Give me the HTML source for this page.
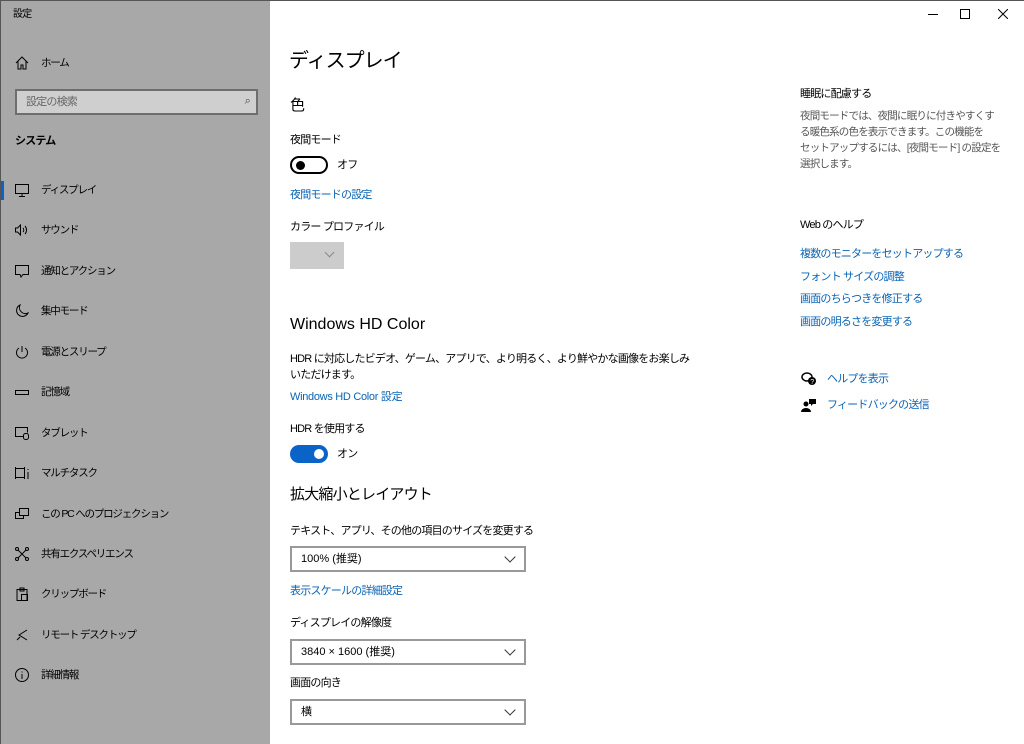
<!DOCTYPE html>
<html><head><meta charset="utf-8"><style>
*{margin:0;padding:0;box-sizing:border-box}
body{width:1024px;height:744px;overflow:hidden;font-family:"Liberation Sans","Noto Sans CJK JP",sans-serif;font-size:11px;letter-spacing:-0.8px;color:#000;background:#fff;position:relative}
.side{position:absolute;left:0;top:0;width:270px;height:744px;background:#a8a8a8;border-left:1px solid #555;border-top:1px solid #555}
.a{position:absolute;white-space:nowrap;line-height:16px}
.ic{position:absolute;left:13px;width:16px;height:16px}
.lnk{color:#0a64b4}
.item{position:absolute;left:40px;font-size:10.5px;letter-spacing:-1.2px;line-height:16px}
.dd{position:absolute;left:290px;width:236px;height:26px;border:2px solid #999;padding:4px 9px;font-size:11px;line-height:15px;letter-spacing:0}
.dd:after{content:"";position:absolute;right:10px;top:5px;width:7px;height:7px;border-right:1px solid #333;border-bottom:1px solid #333;transform:rotate(45deg)}
</style></head><body>
<div class="side">
<div class="a" style="left:12px;top:6px;font-size:10px">設定</div>
<svg class="ic" style="top:54px" viewBox="0 0 16 16" fill="none" stroke="#000"><path d="M2 8L8 2l6 6M4 6v8h3v-4h2v4h3V6"/></svg>
<div class="item" style="top:54px">ホーム</div>
<div class="a" style="left:14px;top:88px;width:243px;height:26px;background:#cfcfcf;border:2px solid #6e6e6e;color:#666;padding:3px 9px">設定の検索<span style="position:absolute;right:6px;top:2px;color:#444">⌕</span></div>
<div class="a" style="left:14px;top:132px;font-weight:bold;font-size:11px">システム</div>
<div class="a" style="left:0;top:180px;width:3px;height:19px;background:#0a64c8"></div>
<svg class="ic" style="top:181px" viewBox="0 0 16 16" fill="none" stroke="#000"><rect x="1.5" y="2.5" width="13" height="9"/><path d="M8 12v2M5 14.5h6"/></svg>
<div class="item" style="top:181px">ディスプレイ</div>
<svg class="ic" style="top:221px" viewBox="0 0 16 16" fill="none" stroke="#000"><path d="M1.5 6h2l3-3v10l-3-3h-2zM9 6a3 3 0 0 1 0 4M11 4a6 6 0 0 1 0 8"/></svg>
<div class="item" style="top:221px">サウンド</div>
<svg class="ic" style="top:262px" viewBox="0 0 16 16" fill="none" stroke="#000"><path d="M1.5 2.5h13v9H9l-2 2.5-1-2.5H1.5z"/></svg>
<div class="item" style="top:262px">通知とアクション</div>
<svg class="ic" style="top:302px" viewBox="0 0 16 16" fill="none" stroke="#000"><path d="M6 2a6 6 0 1 0 8 8A6 6 0 0 1 6 2z"/></svg>
<div class="item" style="top:302px">集中モード</div>
<svg class="ic" style="top:343px" viewBox="0 0 16 16" fill="none" stroke="#000"><path d="M5 4a5.5 5.5 0 1 0 6 0M8 2v6"/></svg>
<div class="item" style="top:343px">電源とスリープ</div>
<svg class="ic" style="top:383px" viewBox="0 0 16 16" fill="none" stroke="#000"><rect x="1.5" y="6.5" width="13" height="4"/></svg>
<div class="item" style="top:383px">記憶域</div>
<svg class="ic" style="top:424px" viewBox="0 0 16 16" fill="none" stroke="#000"><path d="M9 11.5H1.5v-9h12v5"/><rect x="9.5" y="8.5" width="5" height="6" rx="2"/></svg>
<div class="item" style="top:424px">タブレット</div>
<svg class="ic" style="top:464px" viewBox="0 0 16 16" fill="none" stroke="#000"><path d="M1.5 2v12M10.5 2v12M1.5 3.5h9M1.5 12.5h9M14 4v1M14 7v7"/></svg>
<div class="item" style="top:464px">マルチタスク</div>
<svg class="ic" style="top:505px" viewBox="0 0 16 16" fill="none" stroke="#000"><rect x="5.5" y="2.5" width="9" height="7"/><path d="M5 6.5H1.5v6h8V10"/></svg>
<div class="item" style="top:505px">この PC へのプロジェクション</div>
<svg class="ic" style="top:545px" viewBox="0 0 16 16" fill="none" stroke="#000"><circle cx="3" cy="3" r="1.5"/><circle cx="13" cy="3" r="1.5"/><circle cx="3" cy="13" r="1.5"/><circle cx="13" cy="13" r="1.5"/><path d="M4 4l8 8M12 4l-8 8"/></svg>
<div class="item" style="top:545px">共有エクスペリエンス</div>
<svg class="ic" style="top:585px" viewBox="0 0 16 16" fill="none" stroke="#000"><path d="M3 3.5h10v11H3zM6 2h4v3H6z"/><rect x="7.5" y="8.5" width="6" height="6"/></svg>
<div class="item" style="top:585px">クリップボード</div>
<svg class="ic" style="top:626px" viewBox="0 0 16 16" fill="none" stroke="#000"><path d="M13 3L5 8l8 5M3 13l3-3"/></svg>
<div class="item" style="top:626px">リモート デスクトップ</div>
<svg class="ic" style="top:666px" viewBox="0 0 16 16" fill="none" stroke="#000"><circle cx="8" cy="8" r="6.5"/><path d="M8 7v5M8 4.5v1"/></svg>
<div class="item" style="top:666px">詳細情報</div>
</div>
<div class="a" style="left:0;top:0;width:1024px;height:1px;background:#555"></div>
<div class="a" style="left:928px;top:14px;width:10px;height:1px;background:#000"></div>
<div class="a" style="left:960px;top:9px;width:10px;height:10px;border:1px solid #000"></div>
<svg class="a" style="left:998px;top:9px" width="10" height="10" viewBox="0 0 10 10" stroke="#000"><path d="M0 0l10 10M10 0L0 10"/></svg>
<div class="a" style="left:289px;top:47px;font-size:20px;line-height:28px;letter-spacing:-1px">ディスプレイ</div>
<div class="a" style="left:290px;top:96px;font-size:15px;line-height:20px">色</div>
<div class="a" style="left:290px;top:132px">夜間モード</div>
<div class="a" style="left:290px;top:156px;width:38px;height:18px;border:2px solid #000;border-radius:9px"><div style="position:absolute;left:4px;top:3px;width:9px;height:9px;border-radius:50%;background:#000"></div></div>
<div class="a" style="left:337px;top:157px">オフ</div>
<div class="a lnk" style="left:290px;top:187px">夜間モードの設定</div>
<div class="a" style="left:290px;top:219px">カラー プロファイル</div>
<div class="a" style="left:290px;top:242px;width:54px;height:27px;background:#ccc"><div style="position:absolute;left:36px;top:7px;width:7px;height:7px;border-right:1px solid #888;border-bottom:1px solid #888;transform:rotate(45deg)"></div></div>
<div class="a" style="left:290px;top:315px;font-size:16px;line-height:20px;letter-spacing:0">Windows HD Color</div>
<div class="a" style="left:290px;top:351px">HDR に対応したビデオ、ゲーム、アプリで、より明るく、より鮮やかな画像をお楽しみ<br>いただけます。</div>
<div class="a lnk" style="left:290px;top:389px;letter-spacing:-0.3px">Windows HD Color 設定</div>
<div class="a" style="left:290px;top:421px">HDR を使用する</div>
<div class="a" style="left:290px;top:445px;width:38px;height:18px;background:#0a64c8;border-radius:9px"><div style="position:absolute;left:24px;top:4px;width:10px;height:10px;border-radius:50%;background:#fff"></div></div>
<div class="a" style="left:337px;top:446px">オン</div>
<div class="a" style="left:290px;top:485px;font-size:15px;line-height:20px">拡大縮小とレイアウト</div>
<div class="a" style="left:290px;top:523px">テキスト、アプリ、その他の項目のサイズを変更する</div>
<div class="dd" style="top:546px">100% (推奨)</div>
<div class="a lnk" style="left:290px;top:583px">表示スケールの詳細設定</div>
<div class="a" style="left:290px;top:615px">ディスプレイの解像度</div>
<div class="dd" style="top:639px">3840 × 1600 (推奨)</div>
<div class="a" style="left:290px;top:675px">画面の向き</div>
<div class="dd" style="top:699px">横</div>
<div class="a" style="left:800px;top:86px">睡眠に配慮する</div>
<div class="a" style="left:800px;top:108px;color:#555;font-size:10.5px">夜間モードでは、夜間に眠りに付きやすくす<br>る暖色系の色を表示できます。この機能を<br>セットアップするには、[夜間モード] の設定を<br>選択します。</div>
<div class="a" style="left:800px;top:217px">Web のヘルプ</div>
<div class="a lnk" style="left:800px;top:246px">複数のモニターをセットアップする</div>
<div class="a lnk" style="left:800px;top:269px">フォント サイズの調整</div>
<div class="a lnk" style="left:800px;top:291px">画面のちらつきを修正する</div>
<div class="a lnk" style="left:800px;top:314px">画面の明るさを変更する</div>
<svg class="a" style="left:801px;top:372px" width="16" height="14" viewBox="0 0 16 14"><ellipse cx="6" cy="5" rx="5" ry="4" fill="none" stroke="#000" stroke-width="1.5"/><circle cx="11" cy="9" r="4" fill="#000"/><text x="9.3" y="12" fill="#fff" font-size="7" font-family="Liberation Sans">?</text></svg>
<div class="a lnk" style="left:827px;top:371px">ヘルプを表示</div>
<svg class="a" style="left:801px;top:398px" width="16" height="14" viewBox="0 0 16 14"><circle cx="5" cy="6" r="2.5" fill="#000"/><path d="M0 14a5 4 0 0 1 10 0z" fill="#000"/><path d="M8 1h7v5h-3l-2 2V6H8z" fill="#000"/></svg>
<div class="a lnk" style="left:827px;top:397px">フィードバックの送信</div>
</body></html>
